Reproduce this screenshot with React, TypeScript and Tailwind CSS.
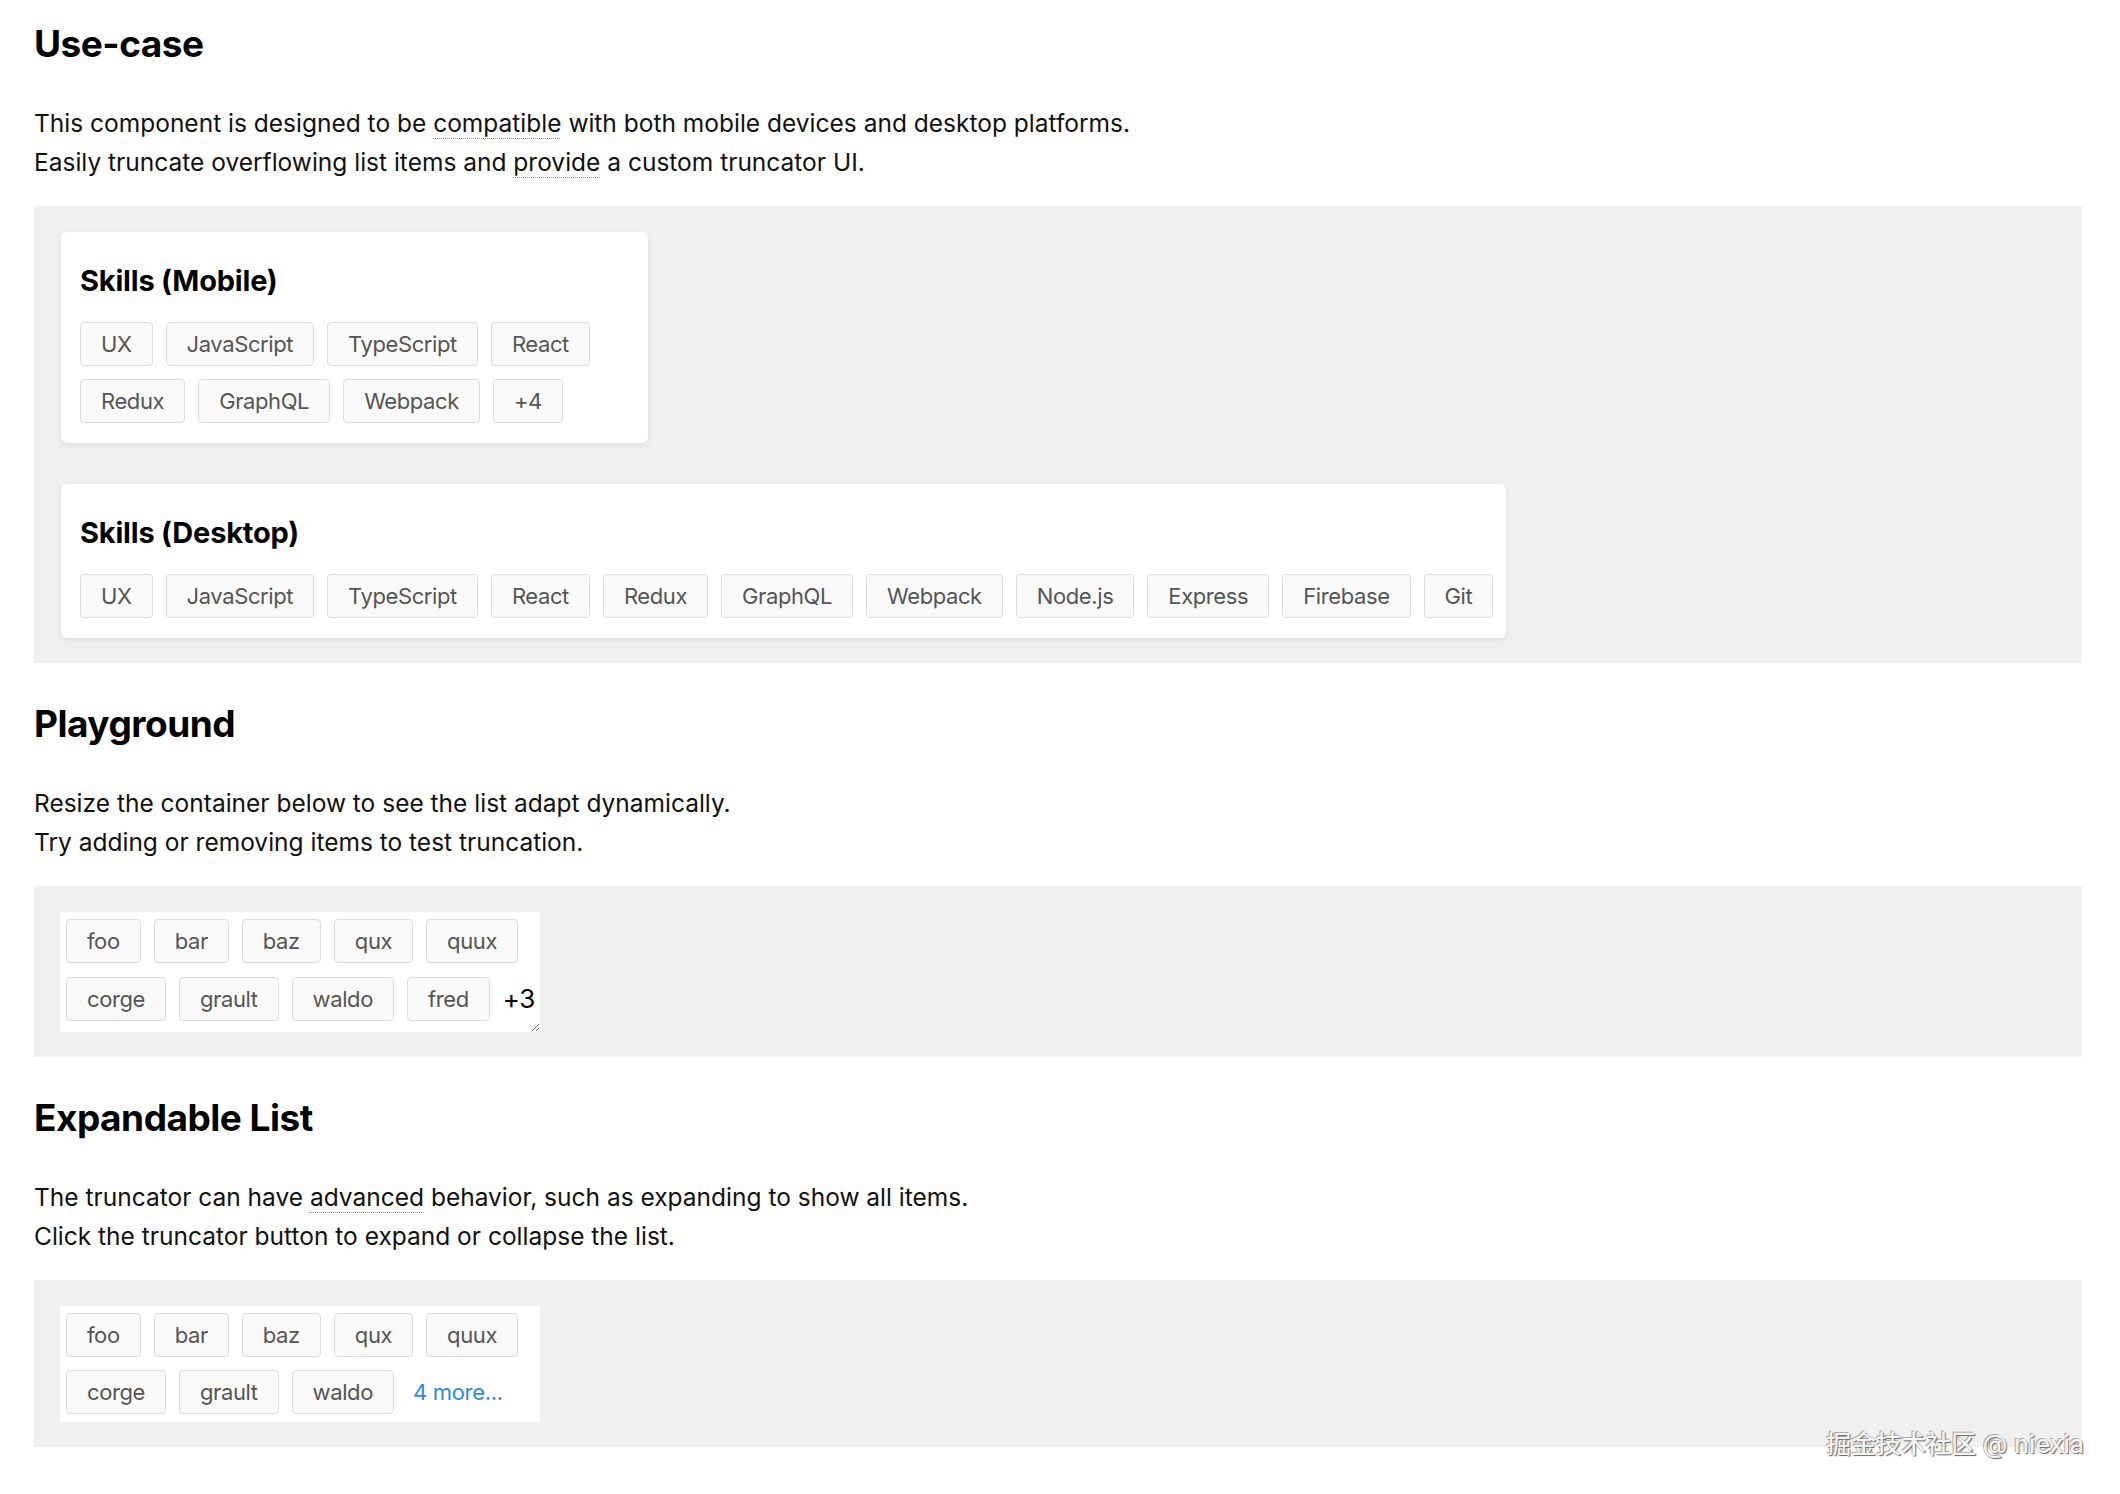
import React from "react";

const mobileRows = [
  ["UX", "JavaScript", "TypeScript", "React"],
  ["Redux", "GraphQL", "Webpack", "+4"],
];

const desktopSkills = [
  "UX",
  "JavaScript",
  "TypeScript",
  "React",
  "Redux",
  "GraphQL",
  "Webpack",
  "Node.js",
  "Express",
  "Firebase",
  "Git",
];

const Tag = ({ children }: { children: React.ReactNode }) => (
  <span className="flex h-[44px] shrink-0 items-center whitespace-nowrap rounded-[4px] border border-[#dcdcdc] bg-[#fafafa] px-[20px] text-[22px] tracking-[-0.4px] text-[#555]">
    {children}
  </span>
);

// dotted "hint" underline used in the docs text
const Hint = ({ children }: { children: React.ReactNode }) => (
  <span className="underline decoration-[#62b08f] decoration-dotted decoration-1 underline-offset-[6px]">
    {children}
  </span>
);

const Heading = ({ children }: { children: React.ReactNode }) => (
  <h2 className="mb-[37px] text-[37px] font-bold leading-[46px] tracking-[-0.5px] text-black">{children}</h2>
);

const Text = ({ children }: { children: React.ReactNode }) => (
  <p className="mb-[24px] text-[24.5px] leading-[39px]">{children}</p>
);

const SkillsCard = ({ title, children, className = "" }: any) => (
  <div
    className={`rounded-[6px] bg-white pb-[20px] pl-[19px] pt-[31px] shadow-[0_2px_6px_rgba(0,0,0,0.08)] ${className}`}
  >
    <h3 className="mb-[24px] text-[29px] font-bold leading-[35px] tracking-[-0.2px] text-black">{title}</h3>
    {children}
  </div>
);

export default function App() {
  return (
    <div className="relative min-h-screen bg-white pb-[40px] pl-[34px] pr-[38px] pt-[21px] font-['Inter','Noto_Sans',sans-serif] text-[#111]">
      {/* Use-case */}
      <Heading>Use-case</Heading>
      <Text>
        This component is designed to be <Hint>compatible</Hint> with both mobile devices and desktop
        platforms.
        <br />
        Easily truncate overflowing list items and <Hint>provide</Hint> a custom truncator UI.
      </Text>
      <div className="mb-[38px] flex flex-col items-start gap-[41px] bg-[#f0f0f0] px-[27px] pb-[25px] pt-[26px]">
        <SkillsCard title="Skills (Mobile)" className="w-[587px]">
          <div className="flex flex-col gap-[13px]">
            {mobileRows.map((row, i) => (
              <div key={i} className="flex gap-[13px]">
                {row.map((s) => (
                  <Tag key={s}>{s}</Tag>
                ))}
              </div>
            ))}
          </div>
        </SkillsCard>
        <SkillsCard title="Skills (Desktop)" className="pr-[13px]">
          <div className="flex gap-[13px]">
            {desktopSkills.map((s) => (
              <Tag key={s}>{s}</Tag>
            ))}
          </div>
        </SkillsCard>
      </div>

      {/* Playground */}
      <Heading>Playground</Heading>
      <Text>
        Resize the container below to see the list adapt dynamically.
        <br />
        Try adding or removing items to test truncation.
      </Text>
      <div className="mb-[38px] bg-[#f0f0f0] px-[26px] pb-[25px] pt-[26px]">
        <div className="flex w-[480px] resize flex-col gap-[14px] overflow-hidden bg-white pb-[11px] pl-[6px] pt-[7px]">
          <div className="flex gap-[13px]">
            {["foo", "bar", "baz", "qux", "quux"].map((s) => (
              <Tag key={s}>{s}</Tag>
            ))}
          </div>
          <div className="flex items-center gap-[13px]">
            {["corge", "grault", "waldo", "fred"].map((s) => (
              <Tag key={s}>{s}</Tag>
            ))}
            <span className="shrink-0 text-[26px] leading-[30px] tracking-[-0.5px] text-black">+3</span>
          </div>
        </div>
      </div>

      {/* Expandable List */}
      <Heading>Expandable List</Heading>
      <Text>
        The truncator can have <Hint>advanced</Hint> behavior, such as expanding to show all items.
        <br />
        Click the truncator button to expand or collapse the list.
      </Text>
      <div className="bg-[#f0f0f0] px-[26px] pb-[25px] pt-[26px]">
        <div className="flex w-[480px] flex-col gap-[13px] bg-white pb-[8px] pl-[6px] pt-[7px]">
          <div className="flex gap-[13px]">
            {["foo", "bar", "baz", "qux", "quux"].map((s) => (
              <Tag key={s}>{s}</Tag>
            ))}
          </div>
          <div className="flex items-center gap-[13px]">
            {["corge", "grault", "waldo"].map((s) => (
              <Tag key={s}>{s}</Tag>
            ))}
            <button className="cursor-pointer pl-[6px] text-[22px] tracking-[-0.3px] text-[#2b8ae6]">4 more...</button>
          </div>
        </div>
      </div>

      {/* watermark */}
      <div className="absolute bottom-[35px] right-[36px] font-['Inter','Noto_Sans_CJK_SC',sans-serif] text-[25px] font-medium leading-[30px] text-[#f4f4f4] [text-shadow:1px_1px_1px_#666,-1px_-1px_0_#aaa]">
        掘金技术社区 @ niexia
      </div>
    </div>
  );
}
